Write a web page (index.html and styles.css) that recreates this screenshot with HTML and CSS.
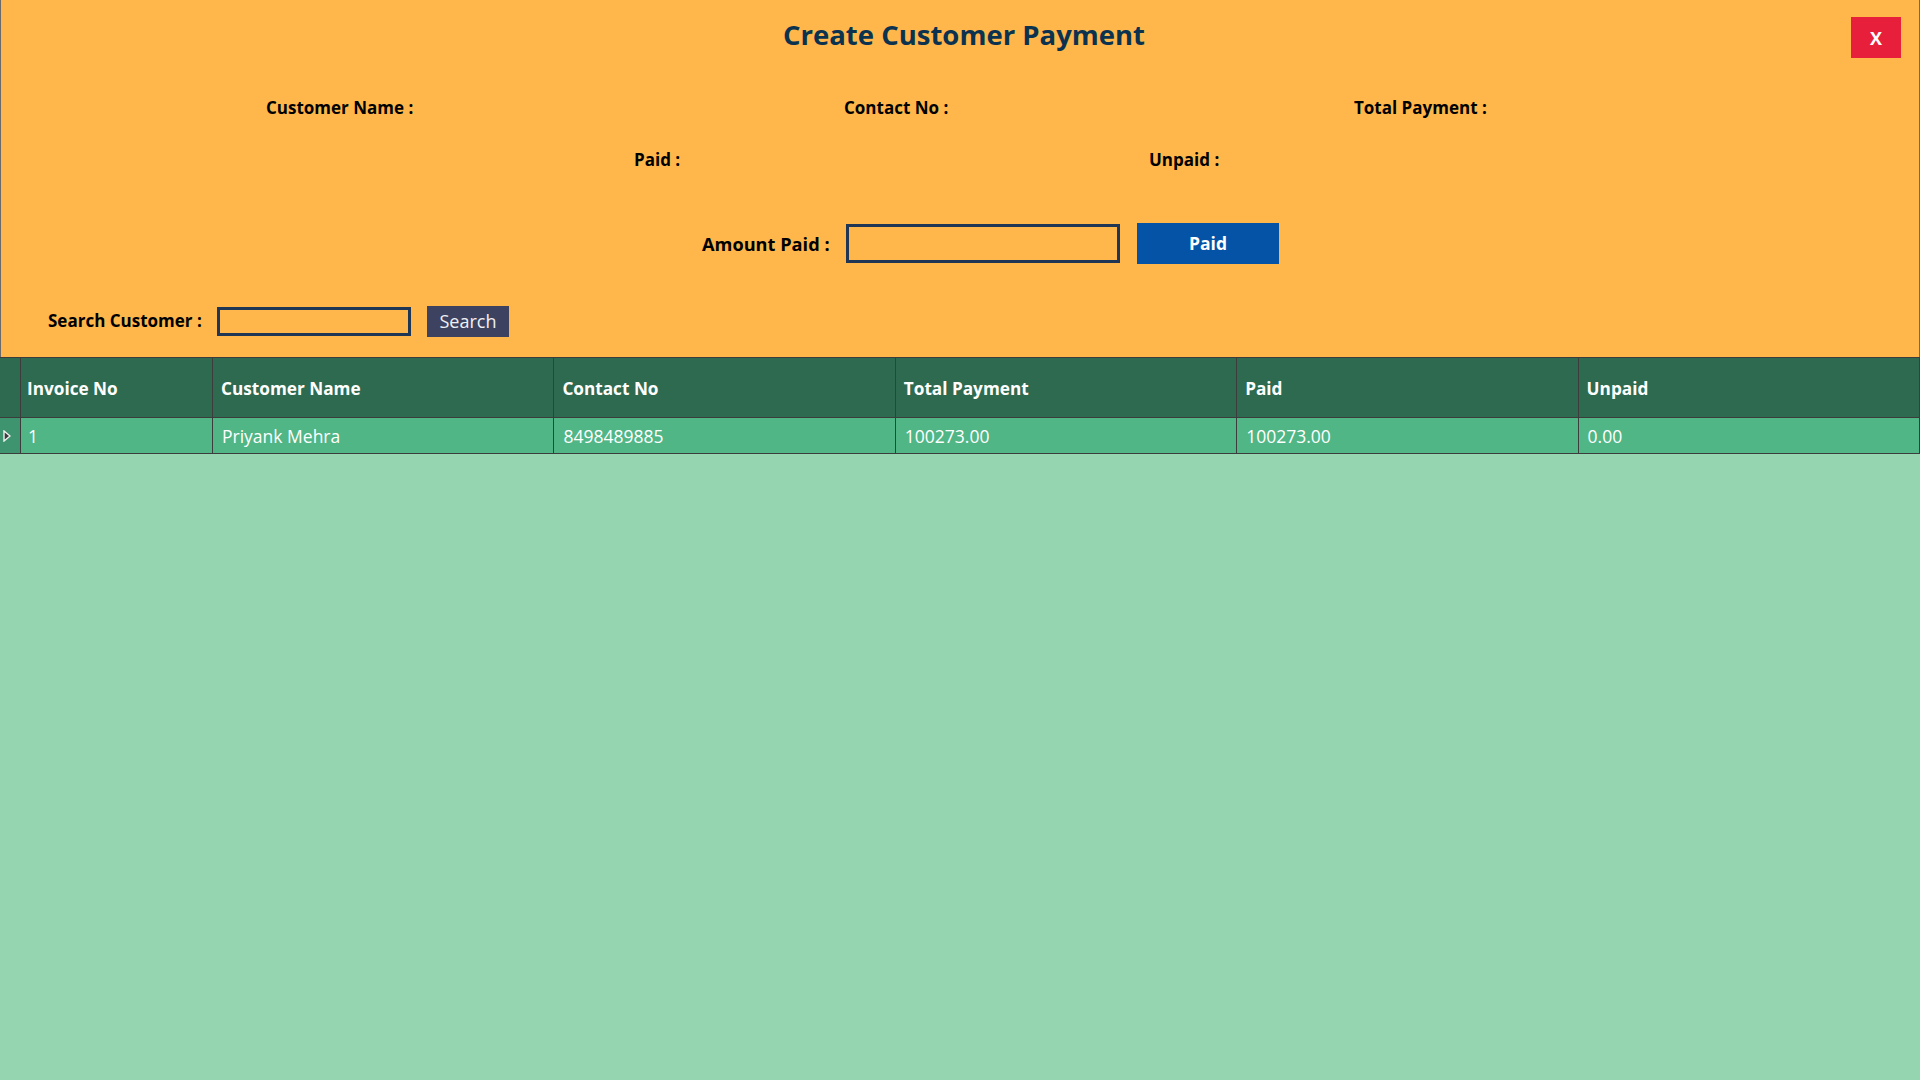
FILE: index.html
```html
<!DOCTYPE html>
<html lang="en">
<head>
<meta charset="utf-8">
<title>Create Customer Payment</title>
<link rel="stylesheet" href="styles.css">
</head>
<body>
<div class="form">
  <header class="panel">
    <div class="title-row"><h1 class="title">Create Customer Payment</h1></div>
    <button class="close" type="button">X</button>
    <div class="info-row row-1">
      <span class="lbl w-cust">Customer Name :</span>
      <span class="lbl w-contact">Contact No :</span>
      <span class="lbl">Total Payment :</span>
    </div>
    <div class="info-row row-2">
      <span class="lbl w-paid">Paid :</span>
      <span class="lbl">Unpaid :</span>
    </div>
    <div class="amount-row">
      <label class="lbl amount-lbl">Amount Paid :</label>
      <input class="amount-input" type="text">
      <button class="paid-btn" type="button">Paid</button>
    </div>
    <div class="search-row">
      <label class="lbl search-lbl">Search Customer :</label>
      <input class="search-input" type="text">
      <button class="search-btn" type="button">Search</button>
    </div>
  </header>
  <div class="grid">
    <div class="cell hd rh"></div>
    <div class="cell hd first">Invoice No</div>
    <div class="cell hd">Customer Name</div>
    <div class="cell hd">Contact No</div>
    <div class="cell hd">Total Payment</div>
    <div class="cell hd">Paid</div>
    <div class="cell hd last">Unpaid</div>
    <div class="cell rw rh"><svg class="arrow" width="8" height="12" viewBox="0 0 8 12"><polygon points="1,1 7,6 1,11" fill="#3b3b3b" stroke="#f2f2f2" stroke-width="1.4"/></svg></div>
    <div class="cell rw first">1</div>
    <div class="cell rw">Priyank Mehra</div>
    <div class="cell rw">8498489885</div>
    <div class="cell rw">100273.00</div>
    <div class="cell rw">100273.00</div>
    <div class="cell rw last">0.00</div>
  </div>
</div>
</body>
</html>
```

FILE: styles.css
```css
* { box-sizing: border-box; }
html, body { margin: 0; padding: 0; }
body {
  width: 1920px;
  height: 1080px;
  background: #95d5b0;
  font-family: "Open Sans", "Noto Sans", sans-serif;
  overflow: hidden;
}
.form { width: 1920px; }
.panel {
  position: relative;
  height: 357px;
  background: #ffb74b;
  border-left: 1px solid #6b6b6b;
  border-right: 1px solid #6b6b6b;
  display: flex;
  flex-direction: column;
}
.title-row {
  height: 68px;
  display: flex;
  align-items: center;
  justify-content: center;
  padding-left: 8px;
}
.title {
  margin: 0;
  font-size: 27.5px;
  font-weight: 700;
  color: #0b3350;
}
.close {
  position: absolute;
  top: 17px;
  right: 18px;
  width: 50px;
  height: 41px;
  border: 0;
  background: #e81f3b;
  color: #fff;
  font-family: inherit;
  font-weight: 700;
  font-size: 18px;
  padding: 0;
}
.lbl {
  font-size: 17px;
  font-weight: 700;
  color: #000;
  white-space: nowrap;
}
.info-row {
  display: flex;
  align-items: center;
  height: 30px;
}
.row-1 { margin-top: 24px; padding-left: 265px; }
.row-2 { margin-top: 22px; padding-left: 633px; }
.w-cust { width: 578px; }
.w-contact { width: 510px; }
.w-paid { width: 515px; }
.amount-row {
  display: flex;
  align-items: center;
  height: 41px;
  margin-top: 49px;
  padding-left: 701px;
}
.amount-lbl { width: 144px; font-size: 18.2px; }
.amount-input {
  width: 274px;
  height: 39px;
  border: 3px solid #1f3655;
  background: transparent;
  margin: 0;
  padding: 0;
}
.paid-btn {
  margin-left: 17px;
  width: 142px;
  height: 41px;
  border: 0;
  background: #0553a6;
  color: #fff;
  font-family: inherit;
  font-weight: 700;
  font-size: 17.5px;
  padding: 0 0 2px;
}
.search-row {
  display: flex;
  align-items: center;
  height: 31px;
  margin-top: 42px;
  padding-left: 47px;
}
.search-lbl { width: 169px; font-size: 17px; padding-bottom: 3px; }
.search-input {
  width: 194px;
  height: 29px;
  border: 3px solid #1f3655;
  background: transparent;
  margin: 0;
  padding: 0;
}
.search-btn {
  margin-left: 16px;
  width: 82px;
  height: 31px;
  border: 0;
  background: #3e4261;
  color: #eef0f5;
  font-family: inherit;
  font-size: 18px;
  padding: 0 0 2px;
}
.grid {
  display: grid;
  grid-template-columns: 20px 192px repeat(5, 1fr);
  grid-template-rows: 60px 36px;
  border-top: 1px solid #3c3c3c;
  border-right: 1px solid #3c3c3c;
}
.cell {
  display: flex;
  align-items: center;
  padding-left: 8px;
  color: #fff;
  border-left: 1px solid #3c3c3c;
  border-bottom: 1px solid #3c3c3c;
  white-space: nowrap;
  overflow: hidden;
}
.hd {
  background: #2e6a50;
  font-weight: 700;
  font-size: 17.2px;
  padding-top: 1px;
}
.hd.first { padding-left: 6px; }
.rw {
  background: #50b686;
  font-size: 17.5px;
  padding-left: 9px;
  padding-top: 0;
}
.rw.first { padding-left: 7px; }
.rh { padding-left: 0; border-left: 0; }
.rw.rh { background: #3f9470; padding-left: 3px; }
.arrow { display: block; }
```
